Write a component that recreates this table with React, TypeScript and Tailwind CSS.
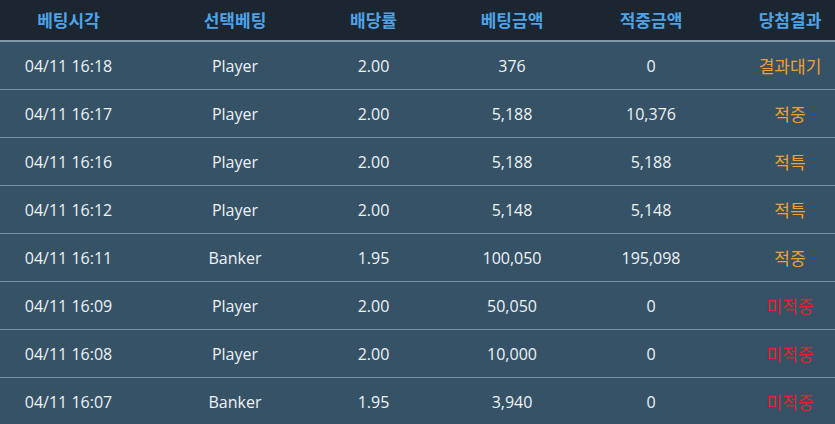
const rows = [
	{ time: "04/11 16:18", pick: "Player", odds: "2.00", bet: "376", win: "0", result: "결과대기", tone: "wait" },
	{ time: "04/11 16:17", pick: "Player", odds: "2.00", bet: "5,188", win: "10,376", result: "적중", tone: "win" },
	{ time: "04/11 16:16", pick: "Player", odds: "2.00", bet: "5,188", win: "5,188", result: "적특", tone: "win" },
	{ time: "04/11 16:12", pick: "Player", odds: "2.00", bet: "5,148", win: "5,148", result: "적특", tone: "win" },
	{ time: "04/11 16:11", pick: "Banker", odds: "1.95", bet: "100,050", win: "195,098", result: "적중", tone: "win" },
	{ time: "04/11 16:09", pick: "Player", odds: "2.00", bet: "50,050", win: "0", result: "미적중", tone: "lose" },
	{ time: "04/11 16:08", pick: "Player", odds: "2.00", bet: "10,000", win: "0", result: "미적중", tone: "lose" },
	{ time: "04/11 16:07", pick: "Banker", odds: "1.95", bet: "3,940", win: "0", result: "미적중", tone: "lose" },
]

const heads = ["베팅시각", "선택베팅", "배당률", "베팅금액", "적중금액", "당첨결과"]

const cols = "grid grid-cols-[137px_196px_81px_196px_82px_196px]"

const App = () => {
	return (
		<div className="w-[835px] h-[424px] overflow-hidden bg-[#365266]" style={{ fontFamily: "'Open Sans', 'Noto Sans CJK KR', sans-serif" }}>
			<div className={cols + " h-[42px] items-center bg-[#1b2631] border-b-2 border-[#7f98aa]"}>
				{heads.map((h) => (
					<div key={h} className="text-center text-[17px] font-bold text-[#4ea3e6] whitespace-nowrap" style={{ fontFamily: "'Noto Sans CJK KR', sans-serif" }}>
						{h}
					</div>
				))}
			</div>
			{rows.map((r, i) => (
				<div key={i} className={cols + " h-[48px] items-center border-b border-[#6f90a8] text-[16px] text-[#eef3f6] whitespace-nowrap"}>
					<div className="text-center">{r.time}</div>
					<div className="text-center">{r.pick}</div>
					<div className="text-center">{r.odds}</div>
					<div className="text-center">{r.bet}</div>
					<div className="text-center">{r.win}</div>
					<div
						className={
							r.tone === "lose"
								? "text-center text-[17px] text-[#e8202c]"
								: "text-center text-[17px] text-[#f0a02e]"
						}
						style={{ fontFamily: "'Noto Sans CJK KR', sans-serif" }}
					>
						{r.result}
					</div>
				</div>
			))}
		</div>
	)
}

export default App
